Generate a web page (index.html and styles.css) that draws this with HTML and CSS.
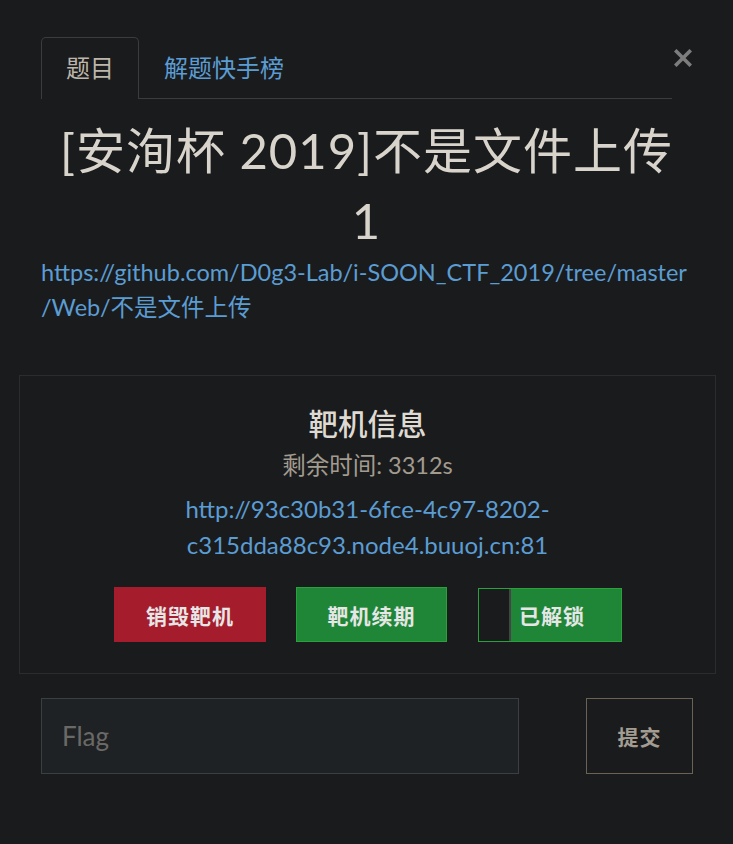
FILE: index.html
```html
<!DOCTYPE html>
<html lang="zh-CN">
<head>
<meta charset="utf-8">
<title>题目</title>
<link rel="stylesheet" href="styles.css">
</head>
<body>
<div class="modal">
  <div class="tabs-row">
    <ul class="tabs">
      <li class="tab active">题目</li>
      <li class="tab">解题快手榜</li>
    </ul>
    <button class="close" type="button" aria-label="Close">
      <svg width="18" height="18" viewBox="0 0 18 18"><path d="M2.5 2.5 L15.5 15.5 M15.5 2.5 L2.5 15.5" stroke="#7d7d7d" stroke-width="3.6" stroke-linecap="square" fill="none"/></svg>
    </button>
  </div>
  <div class="content">
    <h3 class="title">[安洵杯 2019]不是文件上传 1</h3>
    <a class="link" href="#">https://github.com/D0g3-Lab/i-SOON_CTF_2019/tree/master<wbr>/Web/不是文件上传</a>
  </div>
  <div class="box">
    <h4 class="box-title">靶机信息</h4>
    <div class="remain">剩余时间: 3312s</div>
    <a class="target" href="#">http://93c30b31-6fce-4c97-8202-<br>c315dda88c93.node4.buuoj.cn:81</a>
    <div class="actions">
      <button class="btn btn-red" type="button">销毁靶机</button>
      <button class="btn btn-green" type="button">靶机续期</button>
      <button class="btn btn-unlock" type="button"><span class="knob"></span><span class="unlock-label">已解锁</span></button>
    </div>
  </div>
  <form class="flag-row" onsubmit="return false">
    <input class="flag-input" type="text" placeholder="Flag">
    <button class="submit" type="submit">提交</button>
  </form>
</div>
</body>
</html>
```
FILE: styles.css
```css
html, body {
  margin: 0;
  padding: 0;
  background: #1a1b1d;
}
body {
  font-family: Lato, "Noto Sans CJK SC", sans-serif;
  color: #d6d2ca;
  width: 733px;
  height: 844px;
  overflow: hidden;
}
.modal {
  padding: 37px 0 0 0;
}
.tabs-row {
  display: flex;
  align-items: flex-start;
  padding-left: 41px;
}
.tabs {
  list-style: none;
  margin: 0;
  padding: 0;
  display: flex;
  width: 631px;
  border-bottom: 1px solid #3a3c3e;
}
.tab {
  font-size: 24px;
  line-height: 35px;
  padding: 12px 24px 13px 24px;
  color: #5b9dd3;
  border: 1px solid transparent;
  border-bottom: none;
  margin-bottom: -1px;
}
.tab.active {
  color: #bdb6aa;
  border-color: #3a3c3e;
  border-radius: 5px 5px 0 0;
  background: #1a1b1d;
  padding-bottom: 14px;
}
.close {
  margin: 11px 0 0 1px;
  width: 20px;
  height: 20px;
  padding: 0;
  border: none;
  background: none;
  display: flex;
  align-items: center;
  justify-content: center;
}
.content {
  padding: 16px 41px 0 41px;
}
.title {
  margin: 0;
  text-align: center;
  font-weight: 400;
  font-size: 49px;
  line-height: 70px;
  letter-spacing: 1px;
  color: #d8d4cc;
}
.link {
  display: block;
  font-size: 23.5px;
  line-height: 35px;
  color: #5b9dd3;
  text-decoration: none;
  overflow-wrap: anywhere;
}
.box {
  margin: 50px 17px 0 19px;
  border: 1px solid #2b2c2f;
  padding: 31px 20px 31px 20px;
  text-align: center;
}
.box-title {
  margin: 0;
  font-size: 29.5px;
  font-weight: 500;
  line-height: 34px;
  color: #dedad2;
}
.remain {
  margin-top: 7px;
  font-size: 23.5px;
  line-height: 35px;
  color: #a29b8f;
}
.target {
  display: block;
  margin-top: 8px;
  font-size: 24px;
  line-height: 36px;
  color: #5b9dd3;
  text-decoration: none;
}
.actions {
  margin-top: 24px;
  display: flex;
  justify-content: center;
  align-items: flex-start;
  gap: 30px;
  padding-left: 1px;
}
.btn {
  font-family: "Noto Sans CJK SC", Lato, sans-serif;
  font-size: 21px;
  font-weight: 700;
  color: #e6e6e6;
  height: 55px;
  border: 1px solid transparent;
  padding: 0;
  letter-spacing: 1px;
}
.btn-red {
  width: 152px;
  background: #a51d2d;
  border-color: #a51d2d;
}
.btn-green {
  width: 151px;
  background: #1f8637;
  border-color: #2aa23c;
}
.btn-unlock {
  width: 144px;
  height: 54px;
  margin-top: 1px;
  margin-left: 1px;
  background: #1f8637;
  border-color: #2aa23c;
  display: flex;
  align-items: stretch;
}
.knob {
  width: 30px;
  background: #1a1b1d;
  border-right: 2px solid #444444;
}
.unlock-label {
  display: flex;
  align-items: center;
  padding-left: 8px;
}
.flag-row {
  display: flex;
  justify-content: space-between;
  margin: 24px 40px 0 41px;
}
.flag-input {
  width: 478px;
  height: 76px;
  box-sizing: border-box;
  background: #1f2225;
  border: 1px solid #3b3f41;
  color: #d6d2ca;
  font-family: Lato, sans-serif;
  font-size: 26px;
  padding: 0 20px;
  outline: none;
}
.flag-input::placeholder {
  color: #6b6965;
}
.submit {
  width: 107px;
  height: 76px;
  box-sizing: border-box;
  background: #1a1b1d;
  border: 1px solid #6b6255;
  color: #a39d91;
  font-family: "Noto Sans CJK SC", sans-serif;
  font-size: 21px;
  font-weight: 700;
  letter-spacing: 1px;
}
```
